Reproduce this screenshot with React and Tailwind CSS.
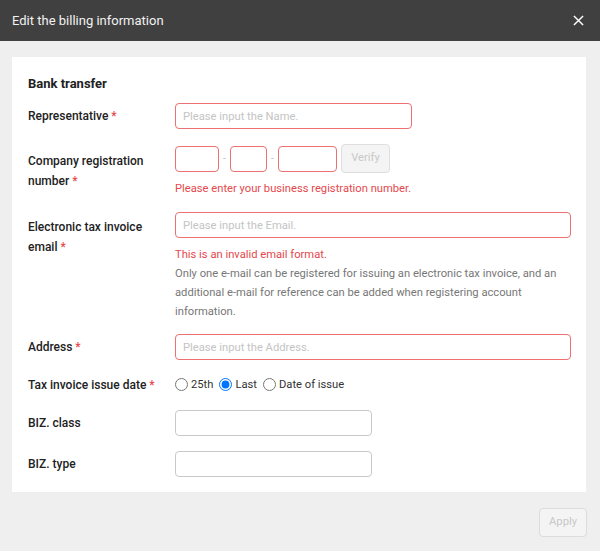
import React, { useState } from "react";

const font = { fontFamily: "Roboto, 'Noto Sans', sans-serif" };

function Label({ children, required, className = "" }) {
  return (
    <div className={`mr-[9px] w-[138px] shrink-0 text-[12px] font-medium text-[#222] ${className}`}>
      {children}
      {required && <span className="text-[#e5484d]"> *</span>}
    </div>
  );
}

function TextInput({ placeholder, error, className = "" }) {
  return (
    <input
      type="text"
      placeholder={placeholder}
      className={`h-[26px] rounded-[4px] border bg-white px-[7px] text-[11.2px] outline-none placeholder:text-[#c4c4c4] ${
        error ? "border-[#ee7070]" : "border-[#c9c9c9]"
      } ${className}`}
    />
  );
}

export default function App() {
  const [issueDate, setIssueDate] = useState("last");

  return (
    <div className="flex h-[551px] w-[600px] flex-col bg-[#efefef]" style={font}>
      {/* Header */}
      <div className="flex h-[41px] shrink-0 items-center justify-between bg-[#404040] pl-3 pr-[14px]">
        <p className="text-[13px] text-[#f2f2f2]">Edit the billing information</p>
        <button className="flex h-4 w-4 items-center justify-center text-white">
          <svg width="11" height="11" viewBox="0 0 12 12" fill="none" stroke="currentColor" strokeWidth="1.6">
            <path d="M1 1L11 11M11 1L1 11" />
          </svg>
        </button>
      </div>

      {/* Card */}
      <div className="ml-3 mr-[14px] mt-4 h-[435px] bg-white pl-4 pr-[15px] pt-[17px]">
        <p className="text-[13px] font-bold leading-[20px] text-[#222]">Bank transfer</p>

        {/* Representative */}
        <div className="mt-[9px] flex">
          <Label required className="pt-[3px] leading-[20px]">Representative</Label>
          <TextInput placeholder="Please input the Name." error className="w-[237px]" />
        </div>

        {/* Company registration number */}
        <div className="mt-[15px] flex">
          <Label required className="pt-[7px] leading-[20px]">
            Company registration number
          </Label>
          <div className="flex flex-col">
            <div className="flex h-[29px] items-center">
              <TextInput error className="w-[44px]" />
              <span className="w-[11px] text-center text-[10px] text-[#bbb]">-</span>
              <TextInput error className="w-[37px]" />
              <span className="w-[11px] text-center text-[10px] text-[#bbb]">-</span>
              <TextInput error className="w-[59px]" />
              <button className="ml-1 h-[29px] w-[49px] rounded-[4px] border border-[#dedede] bg-[#f4f4f4] text-[11.2px] text-[#c8c8c8]">
                Verify
              </button>
            </div>
            <p className="mt-[6px] text-[11.2px] leading-[19px] text-[#e5484d]">
              Please enter your business registration number.
            </p>
          </div>
        </div>

        {/* Electronic tax invoice email */}
        <div className="mt-[14px] flex">
          <Label required className="pt-[5px] leading-[20px]">
            Electronic tax invoice email
          </Label>
          <div className="flex flex-1 flex-col">
            <TextInput placeholder="Please input the Email." error className="w-full" />
            <p className="mt-[7px] text-[11.2px] leading-[19px] text-[#e5484d]">This is an invalid email format.</p>
            <p className="text-[11.2px] leading-[19px] text-[#777]">
              Only one e-mail can be registered for issuing an electronic tax invoice, and an additional e-mail for
              reference can be added when registering account information.
            </p>
          </div>
        </div>

        {/* Address */}
        <div className="mt-[13px] flex">
          <Label required className="pt-[3px] leading-[20px]">Address</Label>
          <TextInput placeholder="Please input the Address." error className="flex-1" />
        </div>

        {/* Tax invoice issue date */}
        <div className="mt-[15px] flex h-[20px] items-center">
          <Label required className="leading-[20px]">Tax invoice issue date</Label>
          <div className="flex items-center gap-[6px] text-[11.2px] text-[#333]">
            {[
              ["25th", "25th"],
              ["last", "Last"],
              ["issue", "Date of issue"],
            ].map(([value, text]) => (
              <label key={value} className="flex items-center gap-[3px]">
                <input
                  type="radio"
                  name="issueDate"
                  checked={issueDate === value}
                  onChange={() => setIssueDate(value)}
                  className="h-[13px] w-[13px]"
                />
                {text}
              </label>
            ))}
          </div>
        </div>

        {/* BIZ. class */}
        <div className="mt-[15px] flex items-center">
          <Label className="leading-[20px]">BIZ. class</Label>
          <TextInput className="w-[197px]" />
        </div>

        {/* BIZ. type */}
        <div className="mt-[15px] flex items-center">
          <Label className="leading-[20px]">BIZ. type</Label>
          <TextInput className="w-[197px]" />
        </div>
      </div>

      {/* Footer */}
      <div className="flex justify-end pr-[13px] pt-4">
        <button className="h-[29px] w-[48px] rounded-[4px] border border-[#dcdcdc] bg-[#f4f4f4] text-[11.2px] text-[#c8c8c8]">
          Apply
        </button>
      </div>
    </div>
  );
}
